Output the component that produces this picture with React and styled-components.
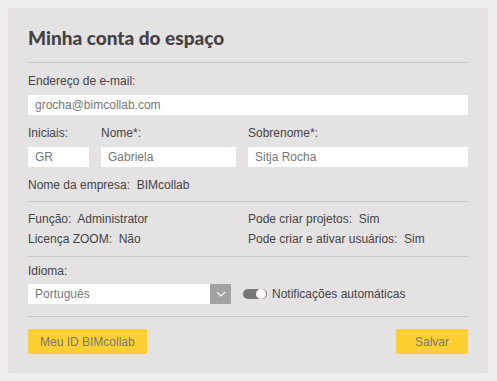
import React from 'react'
import styled, { createGlobalStyle } from 'styled-components'

const GlobalStyle = createGlobalStyle`
  html, body {
    margin: 0;
    background: #efefef;
    font-family: "Liberation Sans", Arial, sans-serif;
  }
`

const Page = styled.div`
  padding: 8px 9px 8px 8px;
`

const Card = styled.div`
  background: #e4e2e3;
  border-radius: 3px;
  padding: 20px 20px 19px 20px;
  width: 440px;
`

const Title = styled.h2`
  margin: 0;
  font-family: Lato, "Open Sans", sans-serif;
  font-weight: 900;
  font-size: 19px;
  line-height: 20px;
  color: #444244;
  height: 34px;
`

const Divider = styled.hr`
  border: 0;
  border-top: 1px solid #c9c7c8;
  margin: 0;
`

const Section = styled.div`
  padding: ${p => p.$pad || '10px 0'};
  display: flex;
  flex-direction: column;
`

const Label = styled.label`
  display: block;
  font-size: 12px;
  line-height: 14px;
  color: #444;
  margin-bottom: ${p => p.$mb || '7px'};
`

const Input = styled.input`
  box-sizing: border-box;
  display: block;
  width: ${p => p.$w || '100%'};
  height: 20px;
  border: 0;
  padding: 0 7px;
  font-family: "Liberation Sans", Arial, sans-serif;
  font-size: 12px;
  color: #777;
  background: #fff;
  outline: none;
`

const NameRow = styled.div`
  display: flex;
  gap: 12px;
  margin-top: 11px;
`

const Field = styled.div`
  width: ${p => p.$w};
`

const Info = styled.div`
  font-size: 12px;
  line-height: 14px;
  color: #444;
  white-space: pre;
  margin-top: ${p => p.$mt || '0'};
`

const InfoGrid = styled.div`
  display: grid;
  grid-template-columns: 220px 220px;
  row-gap: 6px;
`

const LangRow = styled.div`
  display: flex;
  align-items: center;
  gap: 12px;
`

const Select = styled.div`
  display: flex;
  width: 203px;
  height: 20px;
  background: #fff;
`

const SelectText = styled.div`
  flex: 1;
  font-size: 12px;
  line-height: 20px;
  color: #777;
  padding-left: 7px;
`

const SelectArrow = styled.div`
  width: 21px;
  background: #a3a1a2;
  display: flex;
  align-items: center;
  justify-content: center;
`

const Toggle = styled.div`
  display: flex;
  align-items: center;
  gap: 5px;
  font-size: 12px;
  color: #444;
`

const Track = styled.div`
  width: 24px;
  height: 10px;
  border-radius: 5px;
  background: #777;
  position: relative;
`

const Knob = styled.div`
  position: absolute;
  right: 1px;
  top: 0;
  width: 10px;
  height: 10px;
  border-radius: 50%;
  background: #fff;
`

const Footer = styled.div`
  display: flex;
  justify-content: space-between;
  padding-top: 12px;
`

const Button = styled.button`
  background: #fecf30;
  border: 0;
  border-radius: 2px;
  height: 25px;
  padding: 0 ${p => p.$px || '12px'};
  font-family: "Liberation Sans", Arial, sans-serif;
  font-size: 12px;
  color: #777;
  cursor: pointer;
`

export default function App() {
  return (
    <Page>
      <GlobalStyle />
      <Card>
        <Title>Minha conta do espaço</Title>
        <Divider />
        <Section $pad="11px 0 9px">
          <Label>Endereço de e-mail:</Label>
          <Input defaultValue="grocha@bimcollab.com" />
          <NameRow>
            <Field $w="61px">
              <Label>Iniciais:</Label>
              <Input defaultValue="GR" />
            </Field>
            <Field $w="135px">
              <Label>Nome*:</Label>
              <Input defaultValue="Gabriela" />
            </Field>
            <Field $w="220px">
              <Label>Sobrenome*:</Label>
              <Input defaultValue="Sitja Rocha" />
            </Field>
          </NameRow>
          <Info $mt="11px">Nome da empresa:  BIMcollab</Info>
        </Section>
        <Divider />
        <Section $pad="10px 0 10px">
          <InfoGrid>
            <Info>Função:  Administrator</Info>
            <Info>Pode criar projetos:  Sim</Info>
            <Info>Licença ZOOM:  Não</Info>
            <Info>Pode criar e ativar usuários:  Sim</Info>
          </InfoGrid>
        </Section>
        <Divider />
        <Section $pad="7px 0 12px">
          <Label $mb="6px">Idioma:</Label>
          <LangRow>
            <Select>
              <SelectText>Português</SelectText>
              <SelectArrow>
                <svg width="10" height="6" viewBox="0 0 10 6">
                  <path d="M1 1 L5 5 L9 1" fill="none" stroke="#fff" strokeWidth="1.2" />
                </svg>
              </SelectArrow>
            </Select>
            <Toggle>
              <Track><Knob /></Track>
              Notificações automáticas
            </Toggle>
          </LangRow>
        </Section>
        <Divider />
        <Footer>
          <Button>Meu ID BIMcollab</Button>
          <Button $px="19px">Salvar</Button>
        </Footer>
      </Card>
    </Page>
  )
}
